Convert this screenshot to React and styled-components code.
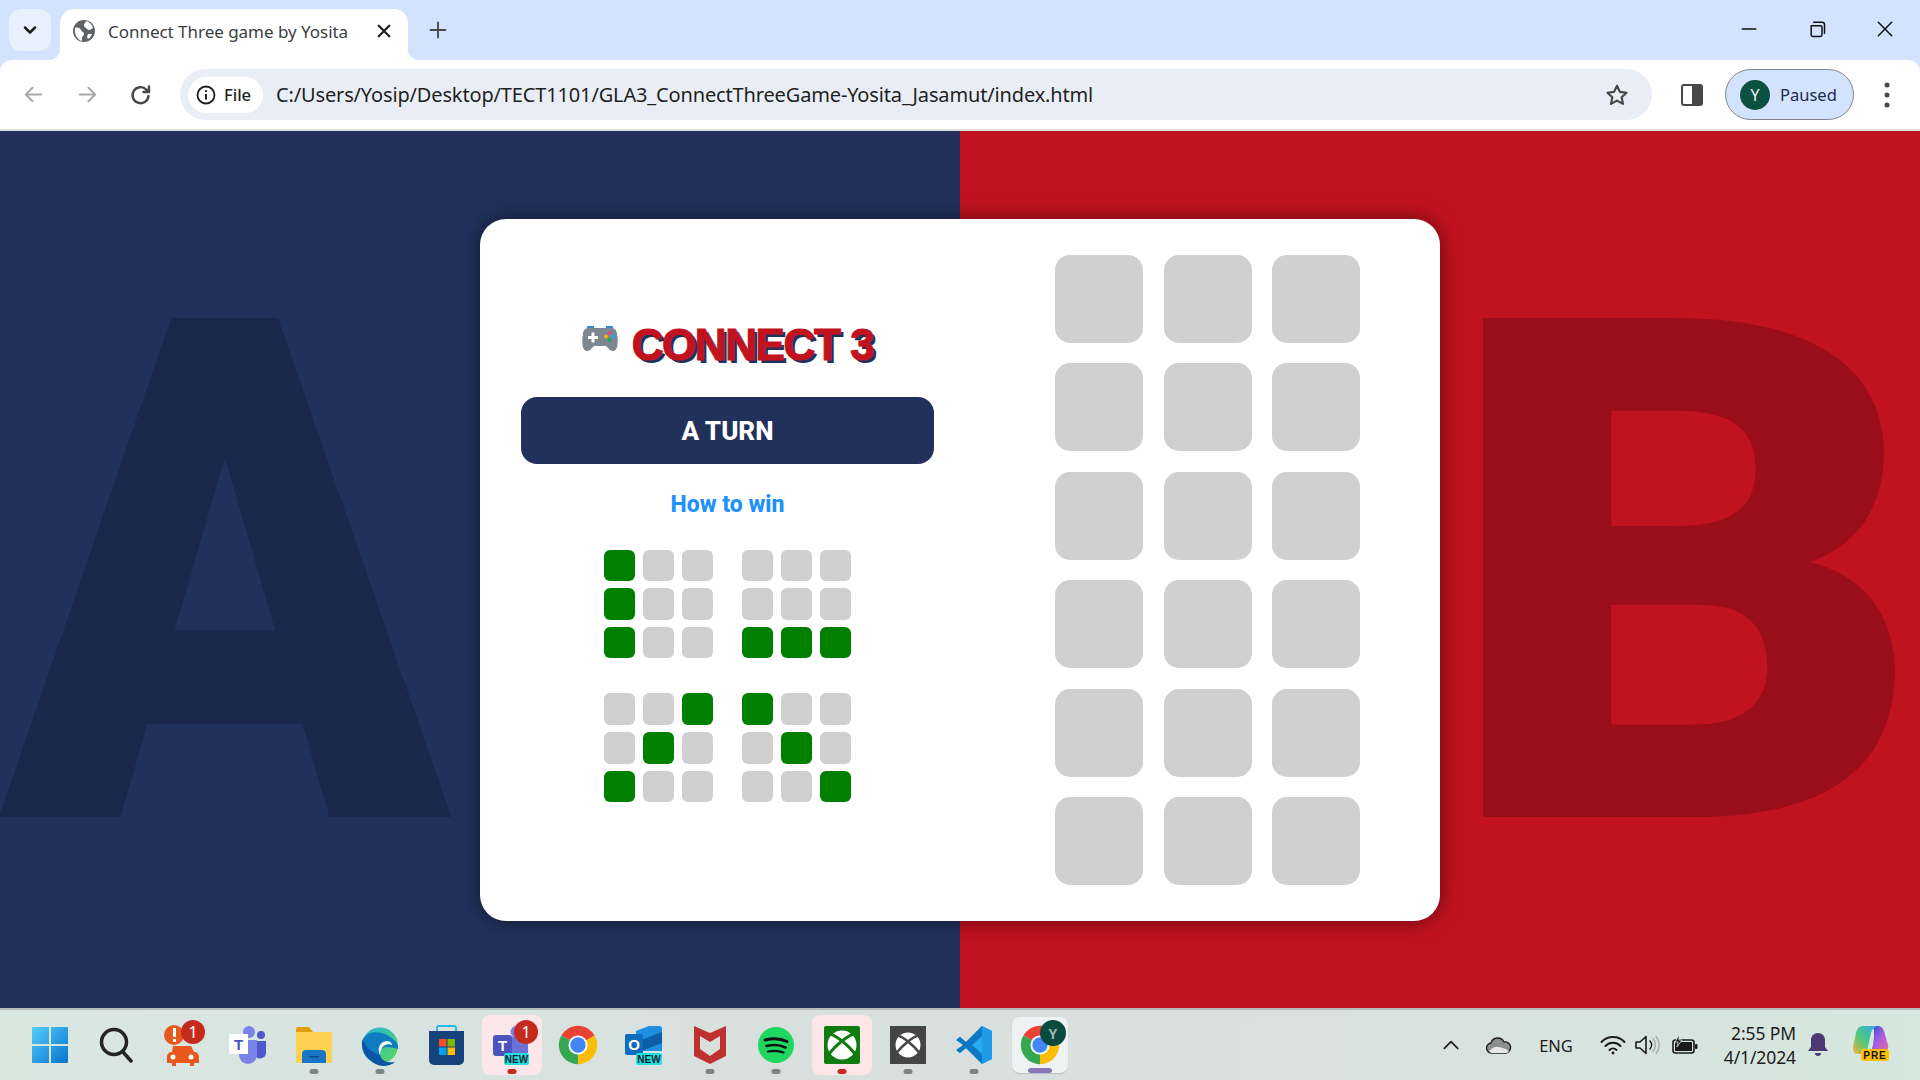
import styled, { createGlobalStyle } from 'styled-components'

const GlobalStyle = createGlobalStyle`
  html, body {
    margin: 0;
    height: 100%;
    overflow: hidden;
  }
  #root {
    height: 100%;
  }
`

const Screen = styled.div`
  height: 100vh;
  display: flex;
  flex-direction: column;
  font-family: "Noto Sans", "Liberation Sans", sans-serif;
`

/* browser chrome */
const TabStrip = styled.div`
  height: 60px;
  flex: none;
  display: flex;
  align-items: flex-end;
  padding-left: 9px;
  background: #d3e3fd;
`
const TabListButton = styled.div`
  width: 42px;
  height: 42px;
  margin-bottom: 9px;
  border-radius: 12px;
  background: #e9f0fd;
  display: flex;
  align-items: center;
  justify-content: center;
`
const Tab = styled.div`
  position: relative;
  width: 348px;
  height: 51px;
  margin-left: 9px;
  padding: 0 15px 7px 13px;
  box-sizing: border-box;
  border-radius: 14px 14px 0 0;
  background: #fff;
  display: flex;
  align-items: center;
  &::before, &::after {
    content: "";
    position: absolute;
    bottom: 0;
    width: 12px;
    height: 12px;
  }
  &::before {
    left: -12px;
    background: radial-gradient(circle at 0 0, transparent 12px, #fff 12.5px);
  }
  &::after {
    right: -12px;
    background: radial-gradient(circle at 100% 0, transparent 12px, #fff 12.5px);
  }
`
const TabTitle = styled.span`
  flex: 1;
  margin-left: 13px;
  font-size: 17px;
  letter-spacing: -0.03px;
  color: #3c4043;
  white-space: nowrap;
`
const NewTab = styled.div`
  width: 30px;
  height: 30px;
  margin: 0 0 15px 15px;
  display: flex;
  align-items: center;
  justify-content: center;
`
const WindowControls = styled.div`
  margin-left: auto;
  height: 58px;
  align-self: flex-start;
  padding-right: 1px;
  display: flex;
`
const WindowButton = styled.div`
  width: 68px;
  display: flex;
  align-items: center;
  justify-content: center;
`
const ToolbarBack = styled.div`
  flex: none;
  background: #d3e3fd;
`
const Toolbar = styled.div`
  height: 69px;
  padding-left: 6px;
  border-radius: 12px 12px 0 0;
  border-bottom: 2px solid #dfe1dc;
  background: #fff;
  display: flex;
  align-items: center;
`
const NavButton = styled.div`
  width: ${p => p.$w || 54}px;
  padding-left: ${p => p.$pl || 0}px;
  flex: none;
  box-sizing: border-box;
  display: flex;
  align-items: center;
  justify-content: center;
`
const Omnibox = styled.div`
  width: 1472px;
  height: 51px;
  margin-left: 12px;
  padding: 0 8px;
  flex: none;
  box-sizing: border-box;
  border-radius: 26px;
  background: #e9eef6;
  display: flex;
  align-items: center;
`
const FileChip = styled.div`
  width: 75px;
  height: 36px;
  padding-left: 8px;
  flex: none;
  box-sizing: border-box;
  border-radius: 18px;
  background: #fff;
  display: flex;
  align-items: center;
  gap: 8px;
  font-size: 16.5px;
  font-weight: 500;
  color: #1f1f1f;
`
const Url = styled.span`
  flex: 1;
  margin-left: 13px;
  font-size: 20px;
  letter-spacing: -0.15px;
  color: #1f1f1f;
  white-space: nowrap;
`
const Profile = styled.div`
  width: 129px;
  height: 51px;
  padding-left: 14px;
  flex: none;
  box-sizing: border-box;
  border: 1.5px solid #80868b;
  border-radius: 26px;
  background: #d3e3fd;
  display: flex;
  align-items: center;
  gap: 10px;
  font-size: 16.5px;
  color: #1b2a4e;
`
const Avatar = styled.div`
  width: 30px;
  height: 30px;
  border-radius: 50%;
  background: #0b5041;
  color: #e8f0ee;
  font-size: 16px;
  display: flex;
  align-items: center;
  justify-content: center;
`

/* game page */
const Page = styled.main`
  flex: 1;
  min-height: 0;
  display: grid;
  grid-template-columns: 480px 960px 480px;
  align-items: center;
  background: linear-gradient(90deg, #22315c 50%, #c1121f 50%);
  overflow: hidden;
`
const GiantLetter = styled.div`
  text-align: center;
  font-family: Roboto, "Liberation Sans", sans-serif;
  font-weight: 900;
  font-size: 702px;
  line-height: 877px;
  color: ${p => p.$color};
  transform: translate(${p => p.$shift}px, 8px) scaleX(${p => p.$stretch});
`
const Card = styled.section`
  position: relative;
  z-index: 1;
  height: 702px;
  padding: 36px 0 36px 41px;
  box-sizing: border-box;
  border-radius: 26px;
  background: #fff;
  box-shadow: 0 0 20px rgba(0, 0, 0, 0.5);
  display: flex;
  gap: 121px;
`
const LeftPanel = styled.div`
  width: 413px;
  padding-top: 72px;
  display: flex;
  flex-direction: column;
  align-items: center;
`
const TitleRow = styled.div`
  height: 36px;
  display: flex;
  align-items: center;
  gap: 14px;
  & > svg {
    margin-bottom: 12px;
  }
`
const Title = styled.h1`
  margin: 0;
  font-family: "Liberation Sans", Arial, sans-serif;
  font-size: 44px;
  font-weight: 700;
  line-height: 36px;
  letter-spacing: -1.4px;
  color: #c1121f;
  -webkit-text-stroke: 1.2px #c1121f;
  text-shadow: 3px 3px 0 #22315c;
  white-space: nowrap;
`
const TurnBanner = styled.div`
  width: 100%;
  height: 67px;
  margin-top: 34px;
  padding-top: 2px;
  box-sizing: border-box;
  border-radius: 16px;
  background: #22315c;
  color: #fff;
  font-family: Roboto, "Liberation Sans", sans-serif;
  font-size: 26px;
  font-weight: 800;
  display: flex;
  align-items: center;
  justify-content: center;
`
const HowTo = styled.h2`
  margin: 25px 0 0;
  font-family: Roboto, "Liberation Sans", sans-serif;
  font-size: 23px;
  font-weight: 800;
  line-height: 32px;
  color: #1e90ff;
`
const Examples = styled.div`
  margin-top: 29px;
  display: grid;
  grid-template-columns: auto auto;
  column-gap: 29px;
  row-gap: 35px;
`
const MiniGrid = styled.div`
  display: grid;
  grid-template-columns: repeat(3, 31.4px);
  grid-auto-rows: 31.4px;
  gap: 7.4px;
`
const MiniCell = styled.div`
  border-radius: 6px;
  background: ${p => (p.$on ? '#008000' : '#d0d0d0')};
`
const Board = styled.div`
  display: grid;
  grid-template-columns: repeat(3, 88px);
  grid-auto-rows: 88px;
  gap: 20.5px;
  align-content: start;
`
const BoardCell = styled.div`
  border-radius: 15px;
  background: #d0d0d0;
`

/* windows taskbar */
const Taskbar = styled.footer`
  height: 72px;
  flex: none;
  box-sizing: border-box;
  padding-left: 17px;
  border-top: 2px solid #b4bcb9;
  background: linear-gradient(90deg, #d9e7e1 0%, #d8e0de 40%, #d8e1de 70%, #d5e7df 100%);
  display: flex;
  align-items: center;
`
const Slot = styled.div`
  width: 66px;
  flex: none;
  display: flex;
  justify-content: center;
`
const Tile = styled.div`
  position: relative;
  width: ${p => (p.$focus ? 56 : 60)}px;
  height: ${p => (p.$focus ? 56 : 60)}px;
  border-radius: 8px;
  background: ${p => (p.$alert ? '#fce6e7' : p.$focus ? '#eef2f2' : 'transparent')};
  box-shadow: ${p => (p.$focus ? '0 1px 1px #b9c2c0' : 'none')};
  display: flex;
  align-items: center;
  justify-content: center;
`
const Runner = styled.span`
  position: absolute;
  left: 50%;
  bottom: ${p => (p.$focus ? 0 : 1)}px;
  width: ${p => (p.$focus ? 24 : 9)}px;
  height: 5px;
  border-radius: 3px;
  transform: translateX(-50%);
  background: ${p => p.$color};
`
const Badge = styled.span`
  position: absolute;
  top: 5px;
  left: ${p => p.$left}px;
  width: 24px;
  height: 24px;
  border-radius: 50%;
  background: #c42b1c;
  color: #fff;
  font-size: 16px;
  display: flex;
  align-items: center;
  justify-content: center;
`
const ProfileDot = styled.span`
  position: absolute;
  top: 3px;
  left: 28px;
  width: 26px;
  height: 26px;
  border-radius: 50%;
  background: #0b4a3f;
  color: #9ab5ad;
  font-size: 14px;
  font-weight: 700;
  display: flex;
  align-items: center;
  justify-content: center;
`
const Tray = styled.div`
  margin-left: auto;
  display: flex;
  align-items: center;
  color: #1b1b1b;
`
const TrayItem = styled.div`
  width: ${p => p.$w}px;
  margin-left: ${p => p.$ml || 0}px;
  flex: none;
  display: flex;
  align-items: center;
  justify-content: center;
  font-size: 16.5px;
`
const Clock = styled.div`
  width: 92px;
  flex: none;
  text-align: right;
  font-size: 17.5px;
  line-height: 24px;
  letter-spacing: -0.1px;
  color: #1b1b1b;
`

const Line = ({ d, w = 20, color = '#444746', sw = 2, vb = 24 }) => (
  <svg width={w} height={w} viewBox={`0 0 ${vb} ${vb}`} fill="none" stroke={color} strokeWidth={sw} strokeLinecap="round" strokeLinejoin="round">
    <path d={d} />
  </svg>
)

const Globe = () => (
  <svg width="22" height="22" viewBox="0 0 22 22">
    <circle cx="11" cy="11" r="11" fill="#5f6368" />
    <path d="M2 8c3-1 5 0 6 2s3 2 3 4-2 2-2 4v3C5 20 1 15 2 8ZM13 1c4 1 6 4 7 7l-3 2c-2 0-3-1-4-2s-2-1-2-3 2-2 2-4ZM15 14l4 0c-1 2-2 4-4 5l-1-2 1-3Z" fill="#fff" />
  </svg>
)

const Controller = () => (
  <svg width="36" height="26" viewBox="0 0 36 26">
    <path d="M5 0h7v4H5zM24 0h7v4h-7z" fill="#2f8fd8" />
    <path d="M7 2h22c3 0 6 2 6 6 1 5 1 10 0 13-1 4-4 5-7 3l-4-4H12l-4 4c-3 2-6 1-7-3-1-3-1-8 0-13 0-4 3-6 6-6Z" fill="#7c8791" />
    <path d="M6 10h3.500V6.500h3V10H16v3h-3.500v3.500h-3V13H6z" fill="#fff" />
    <circle cx="27.500" cy="7" r="2" fill="#e8478b" />
    <circle cx="24" cy="10.500" r="2" fill="#f5b400" />
    <circle cx="31" cy="10.500" r="2" fill="#2fa4e7" />
    <circle cx="27.500" cy="14" r="2" fill="#1fa855" />
  </svg>
)

const WinLogo = () => (
  <svg width="36" height="36" viewBox="0 0 36 36">
    <defs>
      <linearGradient id="win" x1="0" y1="0" x2="1" y2="1">
        <stop offset="0" stopColor="#55cdfb" />
        <stop offset="1" stopColor="#0673cf" />
      </linearGradient>
    </defs>
    <path d="M1 0h16v17H0V1a1 1 0 0 1 1-1ZM19 0h16a1 1 0 0 1 1 1v16H19ZM0 19h17v17H1a1 1 0 0 1-1-1ZM19 19h17v16a1 1 0 0 1-1 1H19Z" fill="url(#win)" />
  </svg>
)

const SearchIcon = () => (
  <svg width="34" height="38" viewBox="0 0 34 38" fill="none" stroke="#242424" strokeWidth="3.500" strokeLinecap="round">
    <circle cx="15" cy="16" r="12.500" />
    <path d="M24 26l8 9" />
  </svg>
)

const CarAlert = () => (
  <svg width="38" height="42" viewBox="0 0 38 42">
    <circle cx="11" cy="11" r="10" fill="#e8581c" />
    <path d="M10 4h3v9h-3zM10 15h3v3h-3z" fill="#fff" />
    <path d="M10 22h18l3 6c3 0 5 2 5 5v6h-5v3h-4v-3H13v3H9v-3H4v-6c0-3 2-5 5-5Z" fill="#e8581c" />
    <circle cx="10" cy="33" r="2.500" fill="#fff" />
    <circle cx="28" cy="33" r="2.500" fill="#fff" />
  </svg>
)

const TeamsLogo = () => (
  <svg width="38" height="38" viewBox="0 0 38 38">
    <circle cx="20" cy="6" r="6" fill="#7b83eb" />
    <circle cx="32" cy="9" r="4" fill="#5059c9" />
    <path d="M27 15h10v12a6 6 0 0 1-10 4Z" fill="#5059c9" />
    <path d="M10 14h18v15a9 9 0 0 1-18 0Z" fill="#7b83eb" />
    <rect x="0" y="8" width="19" height="20" fill="#fff" />
    <text x="9.500" y="24" textAnchor="middle" fontFamily="Liberation Sans" fontSize="15" fontWeight="700" fill="#4b53bc">T</text>
  </svg>
)

const FolderIcon = () => (
  <svg width="36" height="36" viewBox="0 0 36 36">
    <path d="M0 2a2 2 0 0 1 2-2h11l4 5H0Z" fill="#dca000" />
    <path d="M0 5h36v31H0Z" fill="#ffd150" />
    <path d="M6 36V27a4 4 0 0 1 4-4h16a4 4 0 0 1 4 4v9Z" fill="#1976c4" />
    <path d="M13 29h10v1.500H13Z" fill="#0d4f8b" />
  </svg>
)

const EdgeLogo = () => (
  <svg width="36" height="41" viewBox="0 0 36 41">
    <defs>
      <linearGradient id="edgeA" x1="0" y1="0" x2="1" y2="1">
        <stop offset="0" stopColor="#1fb4d8" />
        <stop offset="1" stopColor="#5fd95a" />
      </linearGradient>
    </defs>
    <circle cx="18" cy="20.500" r="18" fill="url(#edgeA)" />
    <path d="M1 14C5 28 14 40 24 40c4 0 7-1 9-3-8 2-14-2-15-7-1-4 2-8 7-8 4 0 8 1 11 2 1-3-1-7-4-9C22 6 8 4 1 14Z" fill="#0f7cc2" />
    <path d="M18 30c1 5 7 9 15 7-5 4-12 5-17 3C8 37 1 30 0 21c-1-3 0-5 1-7 2 8 8 13 17 16Z" fill="#0b56a4" />
    <path d="M18 30c-3-5-1-13 6-14 4 0 6 2 6 4-4-2-11-1-12 10Z" fill="#eef4f4" />
  </svg>
)

const StoreLogo = () => (
  <svg width="35" height="40" viewBox="0 0 35 40">
    <path d="M8 8V3a2 2 0 0 1 2-2h15a2 2 0 0 1 2 2v5" fill="none" stroke="#2ab8e8" strokeWidth="2" />
    <path d="M0 6h35v29a5 5 0 0 1-5 5H5a5 5 0 0 1-5-5Z" fill="#17437c" />
    <path d="M10 14h7.500v7.500H10Z" fill="#f25022" />
    <path d="M18.500 14H26v7.500h-7.500Z" fill="#7fba00" />
    <path d="M10 22.500h7.500V30H10Z" fill="#00a4ef" />
    <path d="M18.500 22.500H26V30h-7.500Z" fill="#ffb900" />
  </svg>
)

const TeamsNew = () => (
  <svg width="38" height="40" viewBox="0 0 38 40">
    <circle cx="24" cy="7" r="6.500" fill="#7b83eb" />
    <path d="M14 12h21v16H14Z" fill="#6a72d6" />
    <rect x="0" y="10" width="19" height="21" rx="3" fill="#4b53bc" />
    <text x="9.500" y="26" textAnchor="middle" fontFamily="Liberation Sans" fontSize="15" fontWeight="700" fill="#fff">T</text>
    <rect x="11" y="28" width="25" height="12" rx="2" fill="#22e0e0" />
    <text x="23.500" y="37.500" textAnchor="middle" fontFamily="Liberation Sans" fontSize="10" fontWeight="700" fill="#123">NEW</text>
  </svg>
)

const ChromeLogo = ({ size = 36 }) => (
  <svg width={size} height={size} viewBox="0 0 48 48">
    <path d="M24 24L6.700 14A20 20 0 0 1 41.300 14Z" fill="#ea4335" />
    <path d="M24 24L41.300 14A20 20 0 0 1 24 44Z" fill="#fbbc04" />
    <path d="M24 24L24 44A20 20 0 0 1 6.700 14Z" fill="#34a853" />
    <circle cx="24" cy="24" r="10" fill="#fff" />
    <circle cx="24" cy="24" r="8" fill="#4285f4" />
  </svg>
)

const OutlookNew = () => (
  <svg width="38" height="40" viewBox="0 0 38 40">
    <path d="M11 6l13-5h10a3 3 0 0 1 3 3v22H11Z" fill="#1f8fe0" />
    <path d="M11 17l26-10v11L11 28Z" fill="#0c5ea8" />
    <rect x="0" y="9" width="18" height="21" rx="2" fill="#0f6cbd" />
    <text x="9" y="25" textAnchor="middle" fontFamily="Liberation Sans" fontSize="15" fontWeight="700" fill="#fff">O</text>
    <rect x="11" y="28" width="26" height="12" rx="2" fill="#22e0e0" />
    <text x="24" y="37.500" textAnchor="middle" fontFamily="Liberation Sans" fontSize="10" fontWeight="700" fill="#123">NEW</text>
  </svg>
)

const McAfee = () => (
  <svg width="32" height="38" viewBox="0 0 32 38">
    <path d="M0 0l16 7 16-7v30l-16 8-16-8Z" fill="#c0302e" />
    <path d="M6 9l10 5 10-5v14l-10 7-10-7Z" fill="#d8e0de" />
    <path d="M6 6v4l10 6 10-6V6l-10 6Z" fill="#c0302e" />
  </svg>
)

const Spotify = () => (
  <svg width="36" height="36" viewBox="0 0 36 36" fill="none" stroke="#111" strokeLinecap="round">
    <circle cx="18" cy="18" r="18" fill="#1ed760" stroke="none" />
    <path d="M7 13c8-2 15-2 22 1.500" strokeWidth="3" />
    <path d="M8.500 19c6-1.500 13-1.500 19 1.500" strokeWidth="2.600" />
    <path d="M10 24.500c5-1 11-1 15.500 1" strokeWidth="2.200" />
  </svg>
)

const XboxSquare = ({ bg, ball }) => (
  <svg width="36" height="38" viewBox="0 0 36 38">
    <rect width="36" height="38" rx={bg === '#107c10' ? 2 : 0} fill={bg} />
    <g transform={`translate(${18 - ball / 2} ${19 - ball / 2}) scale(${ball / 24})`}>
      <circle cx="12" cy="12" r="12" fill="#fff" />
      <path d="M3 3C8 5 17 12 22.500 19M21 3C16 5 7 12 1.500 19" fill="none" stroke={bg} strokeWidth="2.500" />
    </g>
  </svg>
)

const VsCode = () => (
  <svg width="36" height="38" viewBox="0 0 36 38">
    <path d="M26 0l10 5v28l-10 5L10 22l-6 5-3-2 6-6-6-6 3-2 6 5Z" fill="#2aa9f0" />
    <path d="M26 0l10 5v28l-10 5Z" fill="#1f9ae8" />
    <path d="M26 0v10L16 19l10 9v10L10 22l-6 5-4-3 7-5-7-5 4-3 6 5Z" fill="#0c78c2" />
  </svg>
)

const Copilot = () => (
  <svg width="36" height="40" viewBox="0 0 36 40">
    <defs>
      <linearGradient id="coA" x1="0" y1="1" x2="1" y2="0">
        <stop offset="0" stopColor="#f5b13d" />
        <stop offset=".45" stopColor="#50c878" />
        <stop offset="1" stopColor="#35a8ee" />
      </linearGradient>
      <linearGradient id="coB" x1="0" y1="0" x2="1" y2="1">
        <stop offset="0" stopColor="#1a4fd8" />
        <stop offset=".5" stopColor="#a65ce0" />
        <stop offset="1" stopColor="#f06aa6" />
      </linearGradient>
    </defs>
    <path d="M20 1h4c4 0 6 2 7 5l4 14c1 4-1 8-5 8H16c2-2 3-4 4-8l1-8c0-5 0-8-1-11Z" fill="url(#coB)" />
    <path d="M10 1h14c-3 1-5 3-6 7l-3 14c-1 4-3 7-7 7H5c-4 0-5-3-5-7 1-5 2-9 3-14 1-4 3-7 7-7Z" fill="url(#coA)" />
    <rect x="8" y="24" width="28" height="12" rx="3" fill="#ffc107" />
    <text x="22" y="33.500" textAnchor="middle" fontFamily="Liberation Sans" fontSize="10" fontWeight="700" letterSpacing="1" fill="#111">PRE</text>
  </svg>
)

const apps = [
  { icon: <WinLogo /> },
  { icon: <SearchIcon /> },
  { icon: <CarAlert />, badge: 29 },
  { icon: <TeamsLogo /> },
  { icon: <FolderIcon />, run: '#7d8583' },
  { icon: <EdgeLogo />, run: '#7d8583' },
  { icon: <StoreLogo /> },
  { icon: <TeamsNew />, alert: true, badge: 32, run: '#c42b1c' },
  { icon: <ChromeLogo size={46} /> },
  { icon: <OutlookNew /> },
  { icon: <McAfee />, run: '#7d8583' },
  { icon: <Spotify />, run: '#7d8583' },
  { icon: <XboxSquare bg="#107c10" ball={29} />, alert: true, run: '#c42b1c' },
  { icon: <XboxSquare bg="#454545" ball={25} />, run: '#7d8583' },
  { icon: <VsCode />, run: '#7d8583' },
  { icon: <ChromeLogo size={46} />, focus: true, dot: true, run: '#8a78b4' },
]

const wins = [
  [1, 0, 0, 1, 0, 0, 1, 0, 0],
  [0, 0, 0, 0, 0, 0, 1, 1, 1],
  [0, 0, 1, 0, 1, 0, 1, 0, 0],
  [1, 0, 0, 0, 1, 0, 0, 0, 1],
]

const App = () => {
  return (
    <Screen>
      <GlobalStyle />
      <TabStrip>
        <TabListButton>
          <Line d="M6 9l6 6 6-6" w={20} color="#1f1f1f" sw={3} />
        </TabListButton>
        <Tab>
          <Globe />
          <TabTitle>Connect Three game by Yosita</TabTitle>
          <Line d="M5 5l14 14M19 5L5 19" w={18} color="#1f1f1f" sw={3} />
        </Tab>
        <NewTab>
          <Line d="M12 3v18M3 12h18" w={20} color="#474747" sw={2.200} />
        </NewTab>
        <WindowControls>
          <WindowButton>
            <Line d="M4 12h16" w={20} color="#111" sw={2} />
          </WindowButton>
          <WindowButton>
            <Line d="M5 8h11a2 2 0 0 1 2 2v9a2 2 0 0 1-2 2H7a2 2 0 0 1-2-2ZM8 4h10a3 3 0 0 1 3 3v10" w={20} color="#111" sw={1.800} />
          </WindowButton>
          <WindowButton>
            <Line d="M4 4l16 16M20 4L4 20" w={20} color="#111" sw={1.800} />
          </WindowButton>
        </WindowControls>
      </TabStrip>
      <ToolbarBack>
        <Toolbar>
          <NavButton>
            <Line d="M20 12H5M11 5l-7 7 7 7" w={23} color="#a8abad" sw={2.200} />
          </NavButton>
          <NavButton>
            <Line d="M4 12h15M13 5l7 7-7 7" w={23} color="#a8abad" sw={2.200} />
          </NavButton>
          <NavButton>
            <Line d="M19.500 13a8 8 0 1 1-2.300-6.500L20 9M20 3.500V9h-5.500" w={24} color="#474747" sw={2.400} />
          </NavButton>
          <Omnibox>
            <FileChip>
              <svg width="20" height="20" viewBox="0 0 20 20" fill="none">
                <circle cx="10" cy="10" r="8.500" stroke="#1f1f1f" strokeWidth="1.800" />
                <path d="M10 9v5.500M10 5.200v1.800" stroke="#1f1f1f" strokeWidth="2" />
              </svg>
              File
            </FileChip>
            <Url>C:/Users/Yosip/Desktop/TECT1101/GLA3_ConnectThreeGame-Yosita_Jasamut/index.html</Url>
            <NavButton $w={40}>
              <Line d="M12 3.500l2.700 5.600 6.100.8-4.500 4.200 1.200 6.100-5.500-3-5.500 3 1.200-6.100-4.500-4.200 6.100-.8Z" w={26} color="#474747" sw={2} />
            </NavButton>
            <NavButton $w={7} />
          </Omnibox>
          <NavButton $w={73} $pl={7}>
            <svg width="22" height="22" viewBox="0 0 22 22">
              <rect x="1" y="1" width="20" height="20" rx="2" fill="none" stroke="#474747" strokeWidth="2" />
              <rect x="11" y="1" width="10" height="20" fill="#474747" />
            </svg>
          </NavButton>
          <Profile>
            <Avatar>Y</Avatar>
            Paused
          </Profile>
          <NavButton $w={66}>
            <svg width="6" height="26" viewBox="0 0 6 26" fill="#474747">
              <circle cx="3" cy="3" r="2.500" />
              <circle cx="3" cy="13" r="2.500" />
              <circle cx="3" cy="23" r="2.500" />
            </svg>
          </NavButton>
        </Toolbar>
      </ToolbarBack>
      <Page>
        <GiantLetter $color="#1b274b" $shift={-15} $stretch={0.94}>A</GiantLetter>
        <Card>
          <LeftPanel>
            <TitleRow>
              <Controller />
              <Title>CONNECT 3</Title>
            </TitleRow>
            <TurnBanner>A TURN</TurnBanner>
            <HowTo>How to win</HowTo>
            <Examples>
              {wins.map((cells, i) => (
                <MiniGrid key={i}>
                  {cells.map((on, j) => <MiniCell key={j} $on={on} />)}
                </MiniGrid>
              ))}
            </Examples>
          </LeftPanel>
          <Board>
            {Array.from({ length: 18 }).map((_, i) => <BoardCell key={i} />)}
          </Board>
        </Card>
        <GiantLetter $color="#9a0e19" $shift={4} $stretch={1.066}>B</GiantLetter>
      </Page>
      <Taskbar>
        {apps.map((app, i) => (
          <Slot key={i}>
            <Tile $alert={app.alert} $focus={app.focus}>
              {app.icon}
              {app.badge && <Badge $left={app.badge}>1</Badge>}
              {app.dot && <ProfileDot>Y</ProfileDot>}
              {app.run && <Runner $color={app.run} $focus={app.focus} />}
            </Tile>
          </Slot>
        ))}
        <Tray>
          <TrayItem $w={30}>
            <Line d="M4 16l8-8 8 8" w={20} color="#1b1b1b" sw={2} />
          </TrayItem>
          <TrayItem $w={66}>
            <svg width="26" height="18" viewBox="0 0 26 18">
              <path d="M6 17a5 5 0 0 1-1-10 7 7 0 0 1 13-1 5.500 5.500 0 0 1 2 11Z" fill="#8b8f8e" stroke="#222" strokeWidth="1.400" />
              <path d="M3 16c2-4 6-6 10-5s8 2 10 4l-2 2H6Z" fill="#e6e8e7" />
            </svg>
          </TrayItem>
          <TrayItem $w={48}>ENG</TrayItem>
          <TrayItem $w={34} $ml={16}>
            <svg width="26" height="20" viewBox="0 0 26 20" fill="none" stroke="#1b1b1b" strokeWidth="2" strokeLinecap="round">
              <path d="M1.500 7a16 16 0 0 1 23 0M5.500 11a10.500 10.500 0 0 1 15 0M9.500 15a5 5 0 0 1 7 0" />
              <circle cx="13" cy="18" r="1.400" fill="#1b1b1b" stroke="none" />
            </svg>
          </TrayItem>
          <TrayItem $w={36}>
            <svg width="26" height="20" viewBox="0 0 26 20" fill="none" strokeLinecap="round">
              <path d="M1 7h4l6-5.500v17L5 13H1Z" stroke="#1b1b1b" strokeWidth="1.600" strokeLinejoin="round" />
              <path d="M15 6a6 6 0 0 1 0 8" stroke="#1b1b1b" strokeWidth="1.500" />
              <path d="M18 3.500a10 10 0 0 1 0 13M21 1.500a13 13 0 0 1 0 17" stroke="#a7adab" strokeWidth="1.400" />
            </svg>
          </TrayItem>
          <TrayItem $w={38}>
            <svg width="26" height="20" viewBox="0 0 26 20">
              <rect x="1" y="5" width="21" height="13" rx="2.500" fill="none" stroke="#1b1b1b" strokeWidth="1.600" />
              <rect x="3" y="7" width="17" height="9" fill="#1b1b1b" />
              <rect x="23" y="9" width="2.500" height="5" rx="1" fill="#1b1b1b" />
              <path d="M7 0L3 7h3l-1 5 5-7H7Z" fill="#1b1b1b" stroke="#d6e6df" strokeWidth=".8" />
            </svg>
          </TrayItem>
          <Clock>
            2:55 PM<br />4/1/2024
          </Clock>
          <TrayItem $w={44}>
            <svg width="20" height="24" viewBox="0 0 20 24">
              <path d="M10 0c4 0 7 3 7 7v7l3 4H0l3-4V7c0-4 3-7 7-7ZM7 20h6c0 2-1 3-3 3s-3-1-3-3Z" fill="#4b3a73" />
            </svg>
          </TrayItem>
          <TrayItem $w={46} $ml={8}>
            <Copilot />
          </TrayItem>
          <TrayItem $w={26} />
        </Tray>
      </Taskbar>
    </Screen>
  )
}

export default App
